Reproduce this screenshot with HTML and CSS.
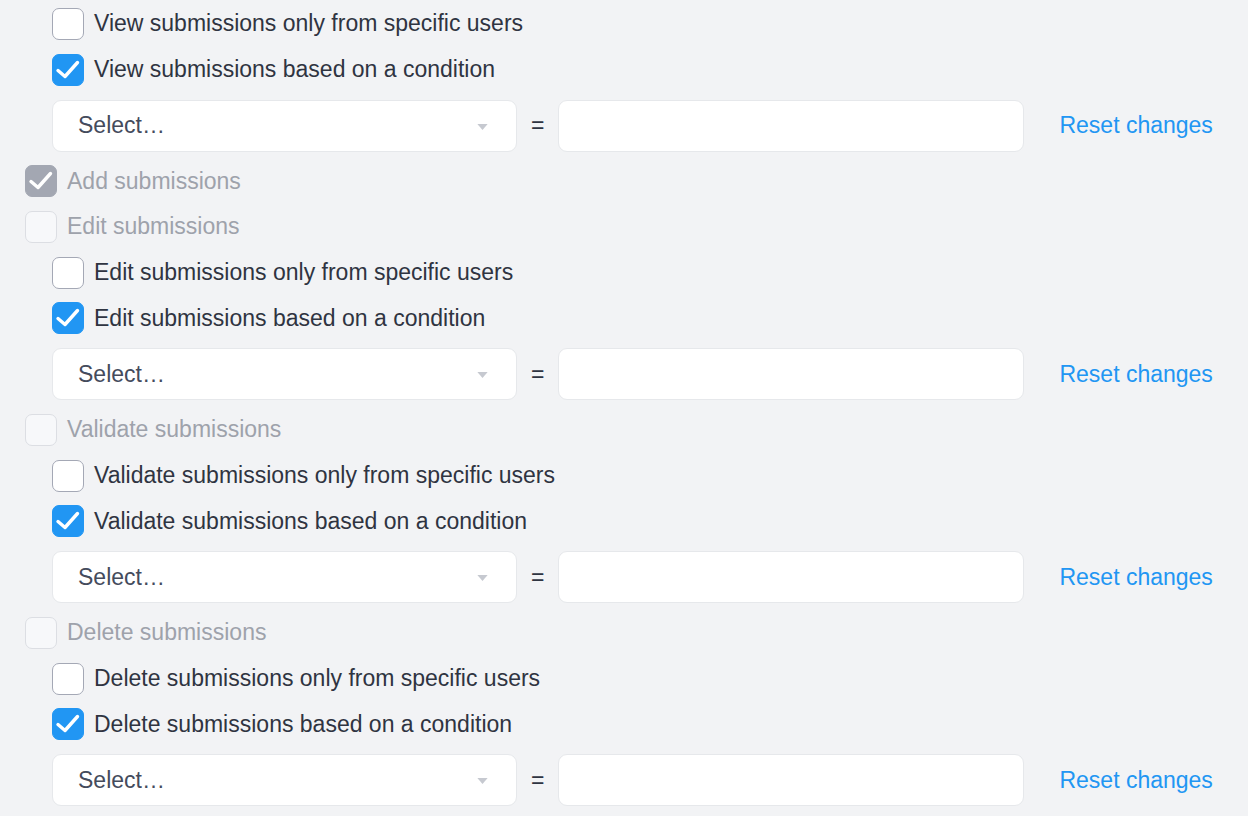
FILE: index.html
```html
<!DOCTYPE html>
<html>
<head>
<meta charset="utf-8">
<link rel="stylesheet" href="styles.css">
</head>
<body>
<div class="perms">
  <div class="row sub"><span class="cb"></span><span class="label">View submissions only from specific users</span></div>
  <div class="row sub"><span class="cb checked"><svg viewBox="0 0 32 32"><polyline points="6,16.5 13,22.5 25.5,8.5"/></svg></span><span class="label">View submissions based on a condition</span></div>
  <div class="cond">
    <div class="select"><span class="ph">Select…</span><svg class="arrow" viewBox="0 0 12 7"><polygon points="0,0 12,0 6,7"/></svg></div>
    <span class="eq">=</span>
    <div class="input"></div>
    <a class="reset">Reset changes</a>
  </div>

  <div class="row top disabled"><span class="cb checked gray"><svg viewBox="0 0 32 32"><polyline points="6,16.5 13,22.5 25.5,8.5"/></svg></span><span class="label">Add submissions</span></div>

  <div class="row top disabled"><span class="cb off"></span><span class="label">Edit submissions</span></div>
  <div class="row sub"><span class="cb"></span><span class="label">Edit submissions only from specific users</span></div>
  <div class="row sub"><span class="cb checked"><svg viewBox="0 0 32 32"><polyline points="6,16.5 13,22.5 25.5,8.5"/></svg></span><span class="label">Edit submissions based on a condition</span></div>
  <div class="cond">
    <div class="select"><span class="ph">Select…</span><svg class="arrow" viewBox="0 0 12 7"><polygon points="0,0 12,0 6,7"/></svg></div>
    <span class="eq">=</span>
    <div class="input"></div>
    <a class="reset">Reset changes</a>
  </div>

  <div class="row top disabled"><span class="cb off"></span><span class="label">Validate submissions</span></div>
  <div class="row sub"><span class="cb"></span><span class="label">Validate submissions only from specific users</span></div>
  <div class="row sub"><span class="cb checked"><svg viewBox="0 0 32 32"><polyline points="6,16.5 13,22.5 25.5,8.5"/></svg></span><span class="label">Validate submissions based on a condition</span></div>
  <div class="cond">
    <div class="select"><span class="ph">Select…</span><svg class="arrow" viewBox="0 0 12 7"><polygon points="0,0 12,0 6,7"/></svg></div>
    <span class="eq">=</span>
    <div class="input"></div>
    <a class="reset">Reset changes</a>
  </div>

  <div class="row top disabled"><span class="cb off"></span><span class="label">Delete submissions</span></div>
  <div class="row sub"><span class="cb"></span><span class="label">Delete submissions only from specific users</span></div>
  <div class="row sub"><span class="cb checked"><svg viewBox="0 0 32 32"><polyline points="6,16.5 13,22.5 25.5,8.5"/></svg></span><span class="label">Delete submissions based on a condition</span></div>
  <div class="cond">
    <div class="select"><span class="ph">Select…</span><svg class="arrow" viewBox="0 0 12 7"><polygon points="0,0 12,0 6,7"/></svg></div>
    <span class="eq">=</span>
    <div class="input"></div>
    <a class="reset">Reset changes</a>
  </div>
</div>
</body>
</html>
```

FILE: styles.css
```css
html, body {
  margin: 0;
  padding: 0;
  background: #f2f3f5;
}
body {
  font-family: "Liberation Sans", Arial, sans-serif;
  font-size: 23px;
  color: #2f3441;
  overflow: hidden;
}
.perms {
  padding-top: 1px;
}
.row {
  display: flex;
  align-items: center;
  height: 45.75px;
  gap: 10px;
}
.row.top { padding-left: 25px; }
.row.sub { padding-left: 52px; }
.row.disabled .label { color: #9ea2ab; }
.cb {
  box-sizing: border-box;
  width: 32px;
  height: 32px;
  flex: 0 0 32px;
  border-radius: 7px;
  border: 1px solid #a4a8b5;
  background: #fff;
  display: flex;
}
.cb svg {
  width: 32px;
  height: 32px;
  margin: -1px;
}
.cb polyline {
  fill: none;
  stroke: #fff;
  stroke-width: 3.4;
  stroke-linecap: round;
  stroke-linejoin: round;
}
.cb.checked {
  background: #2196f3;
  border-color: #2196f3;
}
.cb.checked.gray {
  background: #a3a7b2;
  border-color: #a3a7b2;
}
.cb.off {
  background: #f7f8fa;
  border-color: #dcdee3;
}
.label {
  white-space: nowrap;
}
.cond {
  display: flex;
  align-items: center;
  gap: 14px;
  margin: 7px 0 6.75px 52px;
  height: 52px;
}
.select, .input {
  box-sizing: border-box;
  height: 52px;
  background: #fff;
  border: 1px solid #e6e8eb;
  border-radius: 9px;
}
.select {
  width: 465px;
  display: flex;
  align-items: center;
  justify-content: space-between;
  padding: 0 28px 0 25px;
}
.ph { color: #444b5c; }
.arrow {
  width: 11px;
  height: 6px;
  fill: #c6c9d0;
  margin-top: 2px;
}
.eq { color: #2f3441; }
.input { width: 466px; }
.reset {
  color: #2196f3;
  margin-left: 21px;
  white-space: nowrap;
  cursor: pointer;
}
```
